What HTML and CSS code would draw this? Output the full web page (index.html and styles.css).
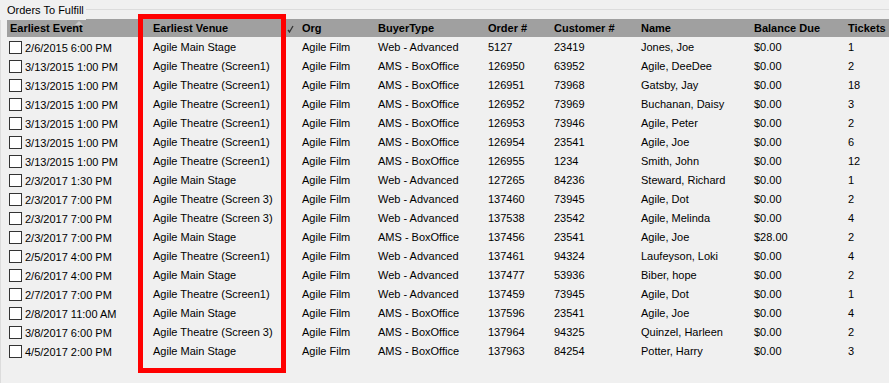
FILE: index.html
```html
<!DOCTYPE html>
<html>
<head>
<meta charset="utf-8">
<link rel="stylesheet" href="styles.css">
</head>
<body>
<div class="group">
  <div class="group-title"><span class="group-label">Orders To Fulfill</span><span class="group-line"></span></div>
  <div class="grid">
    <div class="row head">
      <div class="cell c1">Earliest Event<svg class="sort" width="8" height="4" viewBox="0 0 8 4"><polygon points="0,4 4,0 8,4" fill="#c4c4c4"/></svg></div>
      <div class="cell">Earliest Venue</div>
      <div class="cell chk"><svg width="7" height="8" viewBox="0 0 7 8"><path d="M1 5 L2.5 7 L6 1" stroke="#333" stroke-width="1.3" fill="none"/></svg></div>
      <div class="cell">Org</div>
      <div class="cell">BuyerType</div>
      <div class="cell">Order #</div>
      <div class="cell">Customer #</div>
      <div class="cell">Name</div>
      <div class="cell">Balance Due</div>
      <div class="cell">Tickets</div>
    </div>
    <div class="row"><div class="cell c1"><span class="box"></span>2/6/2015 6:00 PM</div><div class="cell">Agile Main Stage</div><div class="cell"></div><div class="cell">Agile Film</div><div class="cell">Web - Advanced</div><div class="cell">5127</div><div class="cell">23419</div><div class="cell">Jones, Joe</div><div class="cell">$0.00</div><div class="cell">1</div></div>
    <div class="row"><div class="cell c1"><span class="box"></span>3/13/2015 1:00 PM</div><div class="cell">Agile Theatre (Screen1)</div><div class="cell"></div><div class="cell">Agile Film</div><div class="cell">AMS - BoxOffice</div><div class="cell">126950</div><div class="cell">63952</div><div class="cell">Agile, DeeDee</div><div class="cell">$0.00</div><div class="cell">2</div></div>
    <div class="row"><div class="cell c1"><span class="box"></span>3/13/2015 1:00 PM</div><div class="cell">Agile Theatre (Screen1)</div><div class="cell"></div><div class="cell">Agile Film</div><div class="cell">AMS - BoxOffice</div><div class="cell">126951</div><div class="cell">73968</div><div class="cell">Gatsby, Jay</div><div class="cell">$0.00</div><div class="cell">18</div></div>
    <div class="row"><div class="cell c1"><span class="box"></span>3/13/2015 1:00 PM</div><div class="cell">Agile Theatre (Screen1)</div><div class="cell"></div><div class="cell">Agile Film</div><div class="cell">AMS - BoxOffice</div><div class="cell">126952</div><div class="cell">73969</div><div class="cell">Buchanan, Daisy</div><div class="cell">$0.00</div><div class="cell">3</div></div>
    <div class="row"><div class="cell c1"><span class="box"></span>3/13/2015 1:00 PM</div><div class="cell">Agile Theatre (Screen1)</div><div class="cell"></div><div class="cell">Agile Film</div><div class="cell">AMS - BoxOffice</div><div class="cell">126953</div><div class="cell">73946</div><div class="cell">Agile, Peter</div><div class="cell">$0.00</div><div class="cell">2</div></div>
    <div class="row"><div class="cell c1"><span class="box"></span>3/13/2015 1:00 PM</div><div class="cell">Agile Theatre (Screen1)</div><div class="cell"></div><div class="cell">Agile Film</div><div class="cell">AMS - BoxOffice</div><div class="cell">126954</div><div class="cell">23541</div><div class="cell">Agile, Joe</div><div class="cell">$0.00</div><div class="cell">6</div></div>
    <div class="row"><div class="cell c1"><span class="box"></span>3/13/2015 1:00 PM</div><div class="cell">Agile Theatre (Screen1)</div><div class="cell"></div><div class="cell">Agile Film</div><div class="cell">AMS - BoxOffice</div><div class="cell">126955</div><div class="cell">1234</div><div class="cell">Smith, John</div><div class="cell">$0.00</div><div class="cell">12</div></div>
    <div class="row"><div class="cell c1"><span class="box"></span>2/3/2017 1:30 PM</div><div class="cell">Agile Main Stage</div><div class="cell"></div><div class="cell">Agile Film</div><div class="cell">Web - Advanced</div><div class="cell">127265</div><div class="cell">84236</div><div class="cell">Steward, Richard</div><div class="cell">$0.00</div><div class="cell">1</div></div>
    <div class="row"><div class="cell c1"><span class="box"></span>2/3/2017 7:00 PM</div><div class="cell">Agile Theatre (Screen 3)</div><div class="cell"></div><div class="cell">Agile Film</div><div class="cell">Web - Advanced</div><div class="cell">137460</div><div class="cell">73945</div><div class="cell">Agile, Dot</div><div class="cell">$0.00</div><div class="cell">2</div></div>
    <div class="row"><div class="cell c1"><span class="box"></span>2/3/2017 7:00 PM</div><div class="cell">Agile Theatre (Screen 3)</div><div class="cell"></div><div class="cell">Agile Film</div><div class="cell">Web - Advanced</div><div class="cell">137538</div><div class="cell">23542</div><div class="cell">Agile, Melinda</div><div class="cell">$0.00</div><div class="cell">4</div></div>
    <div class="row"><div class="cell c1"><span class="box"></span>2/3/2017 7:00 PM</div><div class="cell">Agile Main Stage</div><div class="cell"></div><div class="cell">Agile Film</div><div class="cell">AMS - BoxOffice</div><div class="cell">137456</div><div class="cell">23541</div><div class="cell">Agile, Joe</div><div class="cell">$28.00</div><div class="cell">2</div></div>
    <div class="row"><div class="cell c1"><span class="box"></span>2/5/2017 4:00 PM</div><div class="cell">Agile Theatre (Screen1)</div><div class="cell"></div><div class="cell">Agile Film</div><div class="cell">Web - Advanced</div><div class="cell">137461</div><div class="cell">94324</div><div class="cell">Laufeyson, Loki</div><div class="cell">$0.00</div><div class="cell">4</div></div>
    <div class="row"><div class="cell c1"><span class="box"></span>2/6/2017 4:00 PM</div><div class="cell">Agile Main Stage</div><div class="cell"></div><div class="cell">Agile Film</div><div class="cell">Web - Advanced</div><div class="cell">137477</div><div class="cell">53936</div><div class="cell">Biber, hope</div><div class="cell">$0.00</div><div class="cell">2</div></div>
    <div class="row"><div class="cell c1"><span class="box"></span>2/7/2017 7:00 PM</div><div class="cell">Agile Theatre (Screen1)</div><div class="cell"></div><div class="cell">Agile Film</div><div class="cell">Web - Advanced</div><div class="cell">137459</div><div class="cell">73945</div><div class="cell">Agile, Dot</div><div class="cell">$0.00</div><div class="cell">1</div></div>
    <div class="row"><div class="cell c1"><span class="box"></span>2/8/2017 11:00 AM</div><div class="cell">Agile Main Stage</div><div class="cell"></div><div class="cell">Agile Film</div><div class="cell">AMS - BoxOffice</div><div class="cell">137596</div><div class="cell">23541</div><div class="cell">Agile, Joe</div><div class="cell">$0.00</div><div class="cell">4</div></div>
    <div class="row"><div class="cell c1"><span class="box"></span>3/8/2017 6:00 PM</div><div class="cell">Agile Theatre (Screen 3)</div><div class="cell"></div><div class="cell">Agile Film</div><div class="cell">AMS - BoxOffice</div><div class="cell">137964</div><div class="cell">94325</div><div class="cell">Quinzel, Harleen</div><div class="cell">$0.00</div><div class="cell">2</div></div>
    <div class="row"><div class="cell c1"><span class="box"></span>4/5/2017 2:00 PM</div><div class="cell">Agile Main Stage</div><div class="cell"></div><div class="cell">Agile Film</div><div class="cell">AMS - BoxOffice</div><div class="cell">137963</div><div class="cell">84254</div><div class="cell">Potter, Harry</div><div class="cell">$0.00</div><div class="cell">3</div></div>
  </div>
  <div class="highlight"></div>
</div>
</body>
</html>
```

FILE: styles.css
```css
html, body {
  margin: 0;
  padding: 0;
  background: #f0f0f0;
  width: 889px;
  height: 383px;
  overflow: hidden;
}

body {
  font-family: "Liberation Sans", Arial, sans-serif;
  font-size: 11px;
  color: #000;
}

.group {
  position: relative;
  height: 383px;
  border-left: 1px solid #dcdcdc;
  box-sizing: border-box;
}

.group-title {
  display: flex;
  align-items: center;
  height: 19px;
}

.group-label {
  padding: 1px 2px 0 7px;
  line-height: 19px;
  background: #f0f0f0;
  margin-left: -1px;
}

.group-line {
  flex: 1;
  height: 0;
  border-top: 1px solid #dcdcdc;
}

.grid {
  margin-left: 6px;
}

.row {
  display: grid;
  grid-template-columns: 143px 135px 14px 76px 110px 66px 87px 113px 94px 1fr;
  height: 19px;
  line-height: 18px;
  overflow: hidden;
}

.row.head {
  background: #a0a0a0;
  height: 18px;
  line-height: 17px;
  font-weight: bold;
}

.cell {
  padding-left: 3px;
  padding-top: 1px;
  white-space: nowrap;
  overflow: hidden;
  position: relative;
}

.row .c1 {
  display: flex;
  align-items: center;
  padding-left: 2px;
  padding-top: 2px;
  height: 17px;
}

.row.head .c1 {
  padding-left: 3px;
  padding-top: 1px;
  height: auto;
  display: block;
}

.chk {
  padding-left: 2px;
  display: flex;
  align-items: center;
}

.sort {
  position: absolute;
  left: 68px;
  top: 2px;
}

.box {
  width: 13px;
  height: 13px;
  box-sizing: border-box;
  border: 1px solid #333;
  background: #fff;
  margin-right: 3px;
  flex: none;
}

.highlight {
  position: absolute;
  left: 137px;
  top: 14px;
  width: 148px;
  height: 359px;
  border: 5px solid #ff0000;
  box-sizing: border-box;
}
```
